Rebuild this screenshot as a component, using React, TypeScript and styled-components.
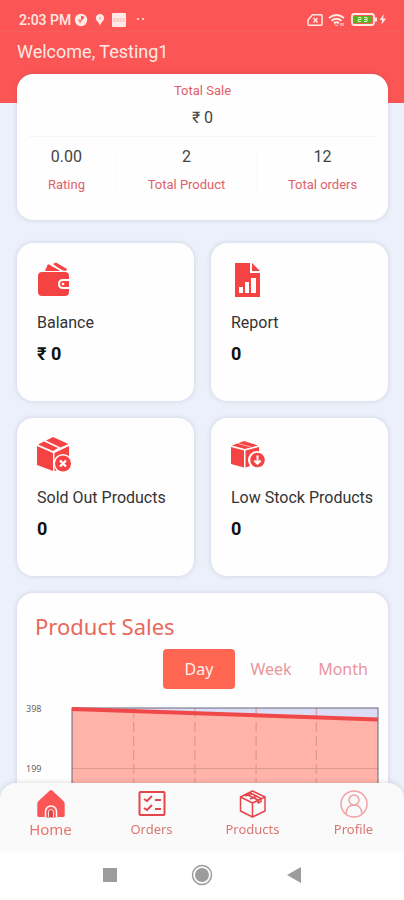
import React, { useState } from "react";
import styled, { createGlobalStyle } from "styled-components";

const RED = "#fc5555";
const ICON_RED = "#f54343";

const GlobalStyle = createGlobalStyle`
  *, *::before, *::after { box-sizing: border-box; }
  body { margin: 0; background: #ffffff; font-family: Roboto, "Noto Sans", sans-serif; }
  h1, h2, h3, p, dl, dt, dd, ul { margin: 0; padding: 0; }
  button { font: inherit; border: 0; background: none; padding: 0; cursor: pointer; }
  svg { display: block; }
`;

const Shell = styled.div`
  display: flex;
  flex-direction: column;
  height: 100vh;
  background: #ffffff;
`;

const Content = styled.main`
  flex: 1;
  min-height: 0;
  overflow-y: auto;
  scrollbar-width: none;
  background: #ecf0fa;
`;

const Header = styled.header`
  background: ${RED};
  color: #ffe9e4;
  padding-bottom: 40px;
`;

const StatusBar = styled.div`
  display: flex;
  align-items: center;
  justify-content: space-between;
  height: 32px;
  padding: 8px 17px 0 19px;
  font-size: 14px;
  font-weight: 500;
  border-bottom: 1px solid #f65e5e;
`;

const StatusGroup = styled.div`
  display: flex;
  align-items: center;
  gap: 2px;
`;

const Welcome = styled.h1`
  padding: 9px 17px 0;
  font-size: 18px;
  line-height: 22px;
  font-weight: 400;
`;

const Card = styled.section`
  background: #fefefe;
  border-radius: 16px;
  box-shadow: 0 0 5px rgba(60, 70, 110, 0.18);
`;

const Page = styled.div`
  display: flex;
  flex-direction: column;
  gap: 17px;
  margin-top: -29px;
  padding: 0 16px 24px 17px;
`;

const Summary = styled(Card)`
  min-height: 146px;
  margin-bottom: 6px;
  padding: 8px 0;
`;

const SaleTotal = styled.dl`
  display: flex;
  flex-direction: column;
  align-items: center;
  gap: 8px;
  margin: 0 12px;
  padding-bottom: 8px;
  border-bottom: 1px solid #f5f5f5;
`;

const Term = styled.dt`
  font-size: 13px;
  line-height: 18px;
  color: #e0616a;
`;

const Amount = styled.dd`
  font-size: 16px;
  line-height: 20px;
  color: #444444;
`;

const Stats = styled.dl`
  display: grid;
  grid-template-columns: 12fr 17fr 16fr;
  padding-top: 10px;
`;

const Stat = styled.div`
  display: flex;
  flex-direction: column-reverse;
  align-items: center;
  gap: 9px;
  & + & { border-left: 1px solid #fafafa; }
`;

const TileGrid = styled.div`
  display: grid;
  grid-template-columns: 1fr 1fr;
  gap: 17px;
`;

const Tile = styled(Card)`
  min-height: 158px;
  padding: 18px 12px 18px 20px;
`;

const TileIcon = styled.div`
  height: 38px;
  display: flex;
  align-items: center;
`;

const TileLabel = styled.h2`
  margin-top: 13px;
  font-size: 16px;
  line-height: 22px;
  font-weight: 400;
  color: #333333;
  white-space: nowrap;
`;

const TileValue = styled.p`
  margin-top: 9px;
  font-size: 18px;
  line-height: 22px;
  font-weight: 700;
  color: #111111;
`;

const SalesCard = styled(Card)`
  padding: 17px 9px 24px;
  font-family: "Noto Sans", sans-serif;
`;

const SalesTitle = styled.h2`
  padding-left: 9px;
  font-size: 22px;
  line-height: 32px;
  font-weight: 400;
  color: #e9685c;
`;

const Periods = styled.div`
  display: flex;
  justify-content: flex-end;
  margin-top: 7px;
`;

const Period = styled.button<{ $active: boolean }>`
  min-width: 72px;
  height: 40px;
  border-radius: 4px;
  font-size: 16px;
  color: ${({ $active }) => ($active ? "#fff0ec" : "#e9959b")};
  background: ${({ $active }) => ($active ? "#ff6753" : "transparent")};
`;

const Chart = styled.div`
  display: grid;
  grid-template-columns: 45px 1fr;
  margin-top: 18px;
`;

const Axis = styled.div`
  display: flex;
  flex-direction: column;
  justify-content: space-between;
  height: 72px;
  margin-top: -4px;
  font-size: 9px;
  line-height: 12px;
  color: #666666;
`;

const Plot = styled.svg`
  width: 100%;
  height: 122px;
`;

const TabBar = styled.nav`
  position: relative;
  display: grid;
  grid-template-columns: repeat(4, 1fr);
  flex-shrink: 0;
  height: 66px;
  margin-top: -14px;
  border-radius: 16px 16px 0 0;
  background: #fafafa;
  box-shadow: 0 -1px 5px rgba(60, 60, 60, 0.14);
  font-family: "Noto Sans", sans-serif;
`;

const TabLink = styled.a<{ $active?: boolean }>`
  display: flex;
  flex-direction: column;
  align-items: center;
  padding-top: 6px;
  font-size: ${({ $active }) => ($active ? 15 : 13)}px;
  line-height: 20px;
  color: ${({ $active }) => ($active ? "#e9746d" : "#d97873")};
  text-decoration: none;
`;

const SystemBar = styled.div`
  display: flex;
  align-items: center;
  justify-content: center;
  gap: 70px;
  flex-shrink: 0;
  height: 51px;
  background: #ffffff;
`;

const SystemButton = styled.button`
  display: grid;
  place-items: center;
  width: 22px;
  height: 22px;
`;

function NotificationIcons() {
  return (
    <svg width="76" height="16" viewBox="0 0 76 16" fill="#ffe9e4" aria-hidden="true">
      <circle cx="8" cy="8" r="6.2" />
      <path d="M8 8V3.800A4.200 4.200 0 0 1 11.500 6L9.500 7.500Z" fill={RED} />
      <path d="M5 7.500h4.500L7 11.500Z" fill={RED} opacity=".75" />
      <path d="M27 2a4.200 4.200 0 0 0-4.200 4.300C22.800 9 26 10 27 14c1-4 4.200-5 4.200-7.700A4.200 4.200 0 0 0 27 2Z" />
      <circle cx="27" cy="6.300" r="1" fill="#f3a09a" />
      <rect x="39" y="1" width="14" height="14" rx="1" />
      <path d="M40.500 7h11M40.500 9h11" stroke="#f2a39d" strokeDasharray="2 1" />
      <circle cx="65" cy="7" r="1.100" />
      <circle cx="70" cy="7" r="1.100" />
    </svg>
  );
}

function DeviceIcons() {
  return (
    <svg width="80" height="16" viewBox="0 0 80 16" fill="none" stroke="#ffe9e4" aria-hidden="true">
      <path d="M5.500 2.700H14q1 0 1 1v8.600q0 1-1 1H2q-1 0-1-1V8Z" strokeWidth="1.500" />
      <path d="m6.500 6 4 4.500m0-4.500-4 4.500" strokeWidth="1.500" />
      <path d="M22 6q7.500-6 15 0M24.500 8.700q5-4 10 0M27 11.300q2.500-2 5 0" strokeWidth="2" />
      <path d="m28 12.500 1.500 1.500 1.500-1.500M34 11v3m2-3v3" />
      <rect x="45" y="2" width="22" height="11" rx="2.500" strokeWidth="1.800" />
      <rect x="47" y="4" width="18" height="7" fill="#56b51e" stroke="none" />
      <path d="M51 5.500h3v2h-3v2h3M57 5.500h3v4h-3m0-2h3" stroke="#d8f1c4" />
      <path d="M69 5.500v4" strokeWidth="2" />
      <path d="m77 2-4.500 6h2.700l-1 5L79 6.500h-3Z" fill="#ffe9e4" stroke="none" />
    </svg>
  );
}

function WalletIcon() {
  return (
    <svg width="34" height="36" viewBox="0 0 34 36" fill={ICON_RED} aria-hidden="true">
      <path d="m8 9 2.500-6q.5-1 1.500-.5L22 8v1Z" />
      <path d="m16 2 3-1.500 11 6.500-1 2-4-.5Z" />
      <path d="m15 3.500 11 5.500" stroke="#fff" strokeWidth="1.200" />
      <path d="M5 10h23q4 0 4 4v3h-6q-5 0-5 5t5 5h6v3q0 4-4 4H5q-4 0-4-4V14q0-4 4-4Z" />
      <path d="M26 19h6v6h-6q-3 0-3-3t3-3Z" />
      <circle cx="26" cy="22" r="1.300" fill="#fff" />
    </svg>
  );
}

function ReportIcon() {
  return (
    <svg width="32" height="38" viewBox="0 0 32 38" fill={ICON_RED} aria-hidden="true">
      <path d="M4 2h15v10h10v24H4Z" />
      <path d="m21 2 8 8h-8Z" />
      <path d="M8 26h4v6H8ZM14 21h4v11h-4ZM20 17h5v15h-5Z" fill="#fff" />
    </svg>
  );
}

function SoldOutIcon() {
  return (
    <svg width="38" height="38" viewBox="0 0 38 38" fill={ICON_RED} aria-hidden="true">
      <path d="m0 10 16 7v18L0 29ZM17.500 17 32 10v13q-13-1-11 11l-3.500 1Z" />
      <path d="m1 8.500 6-3 14 6.500-5 3ZM9 4.500l7-3.500 15.500 7-8 3.500Z" />
      <circle cx="26" cy="27.500" r="9.500" fill="#fff" />
      <circle cx="26" cy="27.500" r="8" />
      <path d="m23 24.500 6 6m0-6-6 6" stroke="#fff" strokeWidth="2.300" />
    </svg>
  );
}

function LowStockIcon() {
  return (
    <svg width="36" height="38" viewBox="0 0 36 38" fill={ICON_RED} aria-hidden="true">
      <path d="m0 11 13 3.500v17L0 28ZM14.500 14.500 28 11v10q-10 1-9 9l-4.500 1.500Z" />
      <path d="m1 9.500 12-4.500 14 4.500-13 3.500Z" />
      <path d="m7 7.500 13 3.500" stroke="#fff" strokeWidth=".6" />
      <circle cx="26" cy="24" r="9" fill="#fff" />
      <circle cx="26.500" cy="24" r="7.300" />
      <path d="M26.500 19.500V27m-3.200-2.500 3.200 3.300 3.200-3.300" fill="none" stroke="#fff" strokeWidth="2" />
    </svg>
  );
}

function HomeIcon() {
  return (
    <svg width="30" height="30" viewBox="0 0 30 30" aria-hidden="true">
      <path d="M13.800 1.500q1.200-1 2.400 0L27.500 12q1.200 1.200 1.200 3v11.500q0 1.500-1.500 1.500H2.800q-1.500 0-1.500-1.500V15q0-1.800 1.200-3Z" fill={RED} />
      <path d="M9.500 28.500V22.500a5.500 5.500 0 0 1 11 0V28.500" fill={RED} stroke="#fff" strokeWidth="1.500" />
      <path d="M12.500 28v-5a2.500 2.500 0 0 1 5 0v5" fill="#d94747" stroke="#fff" strokeWidth=".8" />
    </svg>
  );
}

function OrdersIcon() {
  return (
    <svg width="30" height="30" viewBox="0 0 30 30" fill="none" stroke="#e4454b" strokeWidth="2" aria-hidden="true">
      <rect x="2.500" y="3" width="25" height="23" rx="1" />
      <path d="m7 10 3 2 5-5M7 19l3 2 5-5M18 11h6M18 20h6" />
    </svg>
  );
}

function ProductsIcon() {
  return (
    <svg width="30" height="30" viewBox="0 0 30 30" fill="none" stroke="#e4454b" strokeWidth="1.500" strokeLinejoin="round" aria-hidden="true">
      <path d="m2.500 8 12-6L27 8v14l-12.500 6-12-6ZM2.500 8l12 6L27 8M14.500 14v14" />
      <path d="m8 5 12 6v3l3-1.500V9.500L11.500 3.500M7 7l7-3m-2 6 7-3" />
    </svg>
  );
}

function ProfileIcon() {
  return (
    <svg width="30" height="30" viewBox="0 0 30 30" fill="none" stroke="#f1a3a7" strokeWidth="1.500" aria-hidden="true">
      <circle cx="15" cy="15" r="13" />
      <circle cx="15" cy="11" r="5" />
      <path d="M7 25q.5-9 8-9t8 9" />
    </svg>
  );
}

const tiles = [
  { label: "Balance", value: "₹ 0", Icon: WalletIcon },
  { label: "Report", value: "0", Icon: ReportIcon },
  { label: "Sold Out Products", value: "0", Icon: SoldOutIcon },
  { label: "Low Stock Products", value: "0", Icon: LowStockIcon },
];

const stats = [
  { label: "Rating", value: "0.00" },
  { label: "Total Product", value: "2" },
  { label: "Total orders", value: "12" },
];

const tabs = [
  { label: "Home", Icon: HomeIcon },
  { label: "Orders", Icon: OrdersIcon },
  { label: "Products", Icon: ProductsIcon },
  { label: "Profile", Icon: ProfileIcon },
];

function SalesChart() {
  return (
    <Chart>
      <Axis>
        <span>398</span>
        <span>199</span>
      </Axis>
      <Plot viewBox="0 0 307 122" preserveAspectRatio="none" role="img" aria-label="Product sales by day">
        <rect x="1" y="1" width="305" height="120" fill="#dcdcf6" />
        <path d="M1 1 306 13V121H1Z" fill="#ffb3a9" />
        <path d="M62.500 1v120M123.500 1v120M184.500 1v120M244.500 1v120" stroke="#d3958f" strokeDasharray="10 4" />
        <path d="M1 61.500h305" stroke="#dd9a95" />
        <rect x="1" y="1" width="305" height="120" fill="none" stroke="#66667a" />
        <path d="M1 2 306 12.500" stroke="#f04848" strokeWidth="4" />
      </Plot>
    </Chart>
  );
}

export default function App() {
  const [period, setPeriod] = useState("Day");
  return (
    <Shell>
      <GlobalStyle />
      <Content>
        <Header>
          <StatusBar>
            <StatusGroup>
              <span>2:03 PM</span>
              <NotificationIcons />
            </StatusGroup>
            <DeviceIcons />
          </StatusBar>
          <Welcome>Welcome, Testing1</Welcome>
        </Header>
        <Page>
          <Summary>
            <SaleTotal>
              <Term>Total Sale</Term>
              <Amount>₹ 0</Amount>
            </SaleTotal>
            <Stats>
              {stats.map((s) => (
                <Stat key={s.label}>
                  <Term>{s.label}</Term>
                  <Amount>{s.value}</Amount>
                </Stat>
              ))}
            </Stats>
          </Summary>
          <TileGrid>
            {tiles.map(({ label, value, Icon }) => (
              <Tile key={label}>
                <TileIcon>
                  <Icon />
                </TileIcon>
                <TileLabel>{label}</TileLabel>
                <TileValue>{value}</TileValue>
              </Tile>
            ))}
          </TileGrid>
          <SalesCard>
            <SalesTitle>Product Sales</SalesTitle>
            <Periods>
              {["Day", "Week", "Month"].map((p) => (
                <Period key={p} type="button" $active={p === period} aria-pressed={p === period} onClick={() => setPeriod(p)}>
                  {p}
                </Period>
              ))}
            </Periods>
            <SalesChart />
          </SalesCard>
        </Page>
      </Content>
      <TabBar>
        {tabs.map(({ label, Icon }) => (
          <TabLink key={label} href={`#${label.toLowerCase()}`} $active={label === "Home"}>
            <Icon />
            {label}
          </TabLink>
        ))}
      </TabBar>
      <SystemBar>
        <SystemButton type="button" aria-label="Recent apps">
          <svg width="14" height="14" viewBox="0 0 14 14">
            <rect width="14" height="14" fill="#9c9c9c" />
          </svg>
        </SystemButton>
        <SystemButton type="button" aria-label="Home screen">
          <svg width="22" height="22" viewBox="0 0 22 22">
            <circle cx="11" cy="11" r="9.500" fill="none" stroke="#9c9c9c" strokeWidth="1.500" />
            <circle cx="11" cy="11" r="7" fill="#9c9c9c" />
          </svg>
        </SystemButton>
        <SystemButton type="button" aria-label="Back">
          <svg width="14" height="16" viewBox="0 0 14 16">
            <path d="M14 0v16L0 8Z" fill="#9c9c9c" />
          </svg>
        </SystemButton>
      </SystemBar>
    </Shell>
  );
}
